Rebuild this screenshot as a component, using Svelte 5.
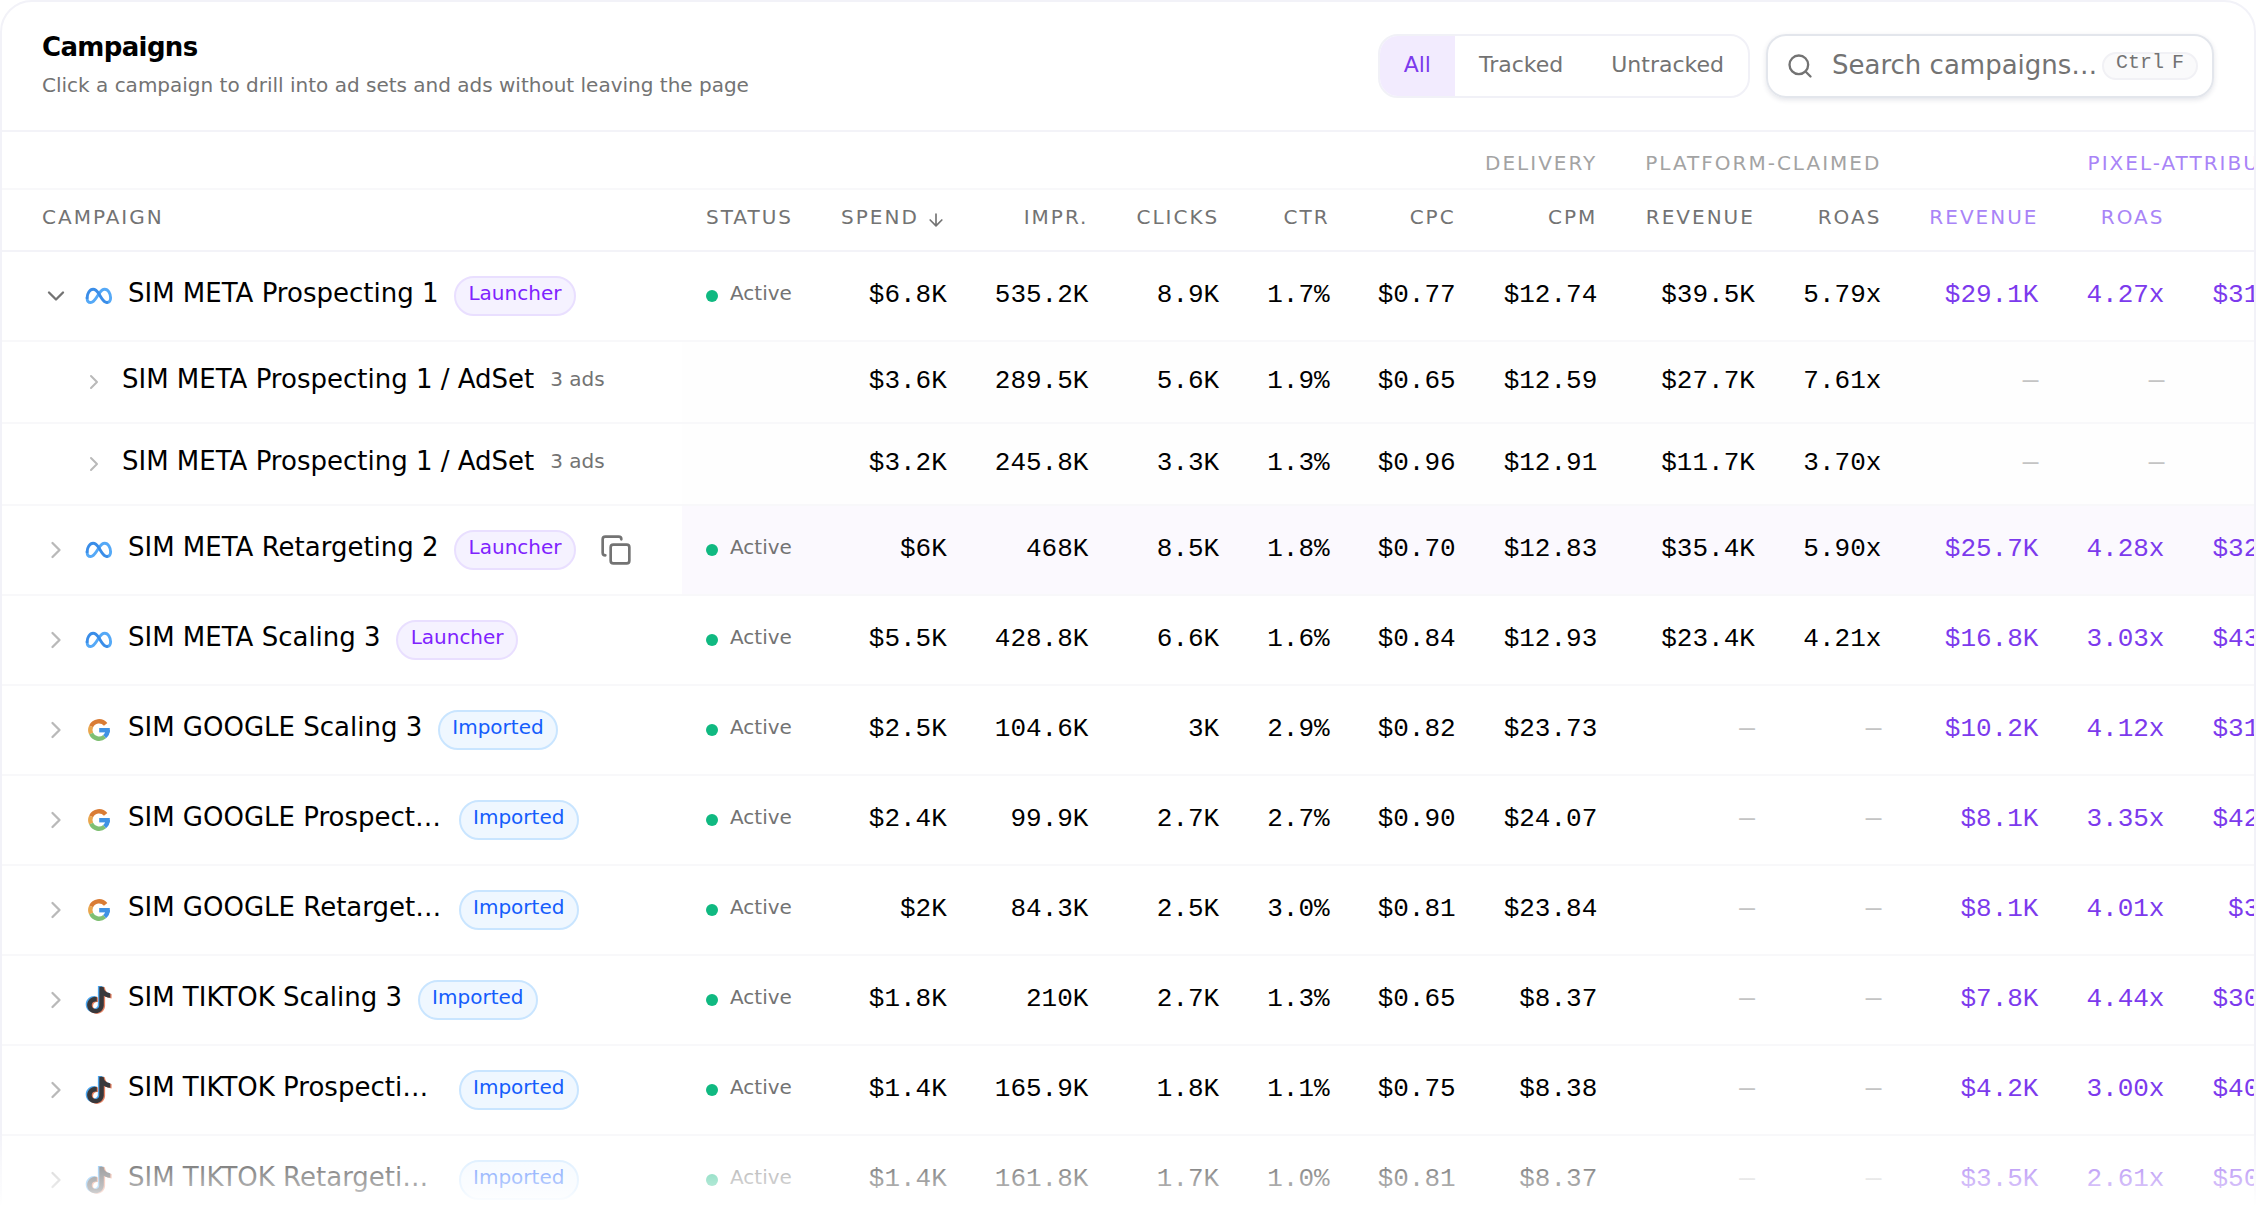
<script lang="ts">
	type Network = 'meta' | 'google' | 'tiktok';

	interface Row {
		name: string;
		network?: Network;
		source?: 'Launcher' | 'Imported';
		ads?: number;
		open?: boolean;
		hovered?: boolean;
		delivery: string[];
		platform: string[];
		pixel: string[];
	}

	const none = '—';

	const rows: Row[] = [
		{ name: 'SIM META Prospecting 1', network: 'meta', source: 'Launcher', open: true, delivery: ['$6.8K', '535.2K', '8.9K', '1.7%', '$0.77', '$12.74'], platform: ['$39.5K', '5.79x'], pixel: ['$29.1K', '4.27x', '$31.08'] },
		{ name: 'SIM META Prospecting 1 / AdSet', ads: 3, delivery: ['$3.6K', '289.5K', '5.6K', '1.9%', '$0.65', '$12.59'], platform: ['$27.7K', '7.61x'], pixel: [none, none, none] },
		{ name: 'SIM META Prospecting 1 / AdSet', ads: 3, delivery: ['$3.2K', '245.8K', '3.3K', '1.3%', '$0.96', '$12.91'], platform: ['$11.7K', '3.70x'], pixel: [none, none, none] },
		{ name: 'SIM META Retargeting 2', network: 'meta', source: 'Launcher', hovered: true, delivery: ['$6K', '468K', '8.5K', '1.8%', '$0.70', '$12.83'], platform: ['$35.4K', '5.90x'], pixel: ['$25.7K', '4.28x', '$32.14'] },
		{ name: 'SIM META Scaling 3', network: 'meta', source: 'Launcher', delivery: ['$5.5K', '428.8K', '6.6K', '1.6%', '$0.84', '$12.93'], platform: ['$23.4K', '4.21x'], pixel: ['$16.8K', '3.03x', '$43.32'] },
		{ name: 'SIM GOOGLE Scaling 3', network: 'google', source: 'Imported', delivery: ['$2.5K', '104.6K', '3K', '2.9%', '$0.82', '$23.73'], platform: [none, none], pixel: ['$10.2K', '4.12x', '$31.41'] },
		{ name: 'SIM GOOGLE Prospecting 1', network: 'google', source: 'Imported', delivery: ['$2.4K', '99.9K', '2.7K', '2.7%', '$0.90', '$24.07'], platform: [none, none], pixel: ['$8.1K', '3.35x', '$42.19'] },
		{ name: 'SIM GOOGLE Retargeting 2', network: 'google', source: 'Imported', delivery: ['$2K', '84.3K', '2.5K', '3.0%', '$0.81', '$23.84'], platform: [none, none], pixel: ['$8.1K', '4.01x', '$33.5'] },
		{ name: 'SIM TIKTOK Scaling 3', network: 'tiktok', source: 'Imported', delivery: ['$1.8K', '210K', '2.7K', '1.3%', '$0.65', '$8.37'], platform: [none, none], pixel: ['$7.8K', '4.44x', '$30.29'] },
		{ name: 'SIM TIKTOK Prospecting 1', network: 'tiktok', source: 'Imported', delivery: ['$1.4K', '165.9K', '1.8K', '1.1%', '$0.75', '$8.38'], platform: [none, none], pixel: ['$4.2K', '3.00x', '$40.84'] },
		{ name: 'SIM TIKTOK Retargeting 2', network: 'tiktok', source: 'Imported', delivery: ['$1.4K', '161.8K', '1.7K', '1.0%', '$0.81', '$8.37'], platform: [none, none], pixel: ['$3.5K', '2.61x', '$50.77'] }
	];

	// the note is drawn three times, shifted, to get the coloured edges
	const note =
		'M12.525.02c1.310-.02 2.610-.01 3.910-.02.08 1.530.63 3.090 1.750 4.170 1.120 1.110 2.700 1.620 4.240 1.790v4.030c-1.440-.05-2.890-.35-4.200-.97-.57-.26-1.100-.59-1.620-.93-.01 2.920.01 5.840-.02 8.750-.08 1.400-.54 2.790-1.350 3.940-1.310 1.920-3.580 3.170-5.910 3.210-1.430.08-2.860-.31-4.080-1.030-2.020-1.190-3.440-3.370-3.650-5.710-.02-.5-.03-1-.01-1.490.18-1.900 1.120-3.720 2.580-4.960 1.660-1.440 3.980-2.130 6.150-1.720.02 1.480-.04 2.960-.04 4.440-.99-.32-2.150-.23-3.020.37-.63.41-1.110 1.040-1.360 1.750-.21.51-.15 1.070-.14 1.610.24 1.640 1.820 3.020 3.500 2.870 1.120-.01 2.190-.66 2.770-1.610.19-.33.4-.67.41-1.060.1-1.790.06-3.570.07-5.360.01-4.030-.01-8.050.02-12.070z';

	const filters = ['All', 'Tracked', 'Untracked'];
	let filter = $state('All');
	let query = $state('');
</script>

{#snippet value(text: string)}
	<td class="num" class:none={text === none}><span class="txt">{text}</span></td>
{/snippet}

{#snippet logo(network: Network)}
	{#if network === 'meta'}
		<svg class="logo" viewBox="0 0 28 28" fill="none" stroke-width="2.9" stroke-linecap="round" stroke-linejoin="round">
			<path stroke="#55a9f7" d="M13.900 11.800C16 8.500 17.700 7.300 19.700 7.300c3.500 0 5.900 4.300 5.900 8.500 0 2.900-1.200 4.700-3.600 4.700" />
			<path stroke="#55a9f7" d="M2.100 15.900c0 2.900 1.300 4.600 3.600 4.600 2.400 0 3.800-1.800 6.100-5.500l2.100-3.200" />
			<path stroke="#3a8de8" d="M2.100 15.900C2.100 11.700 4.700 7.300 8.100 7.300c2.100 0 3.700 1.200 5.800 4.500l1.900 3.200c2.400 4.100 3.900 5.500 6.200 5.500" />
		</svg>
	{:else if network === 'google'}
		<svg class="logo" viewBox="0 0 28 28" fill="none" stroke-width="4.4">
			<path stroke="#d97c35" d="M20.660 8.410A8.700 8.700 0 0 0 6.120 10.320" />
			<path stroke="#eaa64e" d="M6.120 10.320a8.700 8.700 0 0 0 0 7.360" />
			<path stroke="#7fbf73" d="M6.120 17.680a8.700 8.700 0 0 0 13.470 2.980" />
			<path stroke="#3f92e4" d="M19.590 20.660A8.700 8.700 0 0 0 22.700 14" />
			<path fill="#3f92e4" d="M14.200 12H24.800v4.400H14.200z" />
		</svg>
	{:else}
		<svg class="logo" viewBox="0 0 28 28">
			<path fill="#4da6ee" transform="translate(-1 0) scale(1.110)" d={note} />
			<path fill="#e58263" transform="translate(1.700 1.300) scale(1.110)" d={note} />
			<path fill="#38383b" transform="translate(.4 .7) scale(1.110)" d={note} />
		</svg>
	{/if}
{/snippet}

<div class="page">
	<section class="card">
		<header class="top">
			<div class="heading">
				<h2>Campaigns</h2>
				<p>Click a campaign to drill into ad sets and ads without leaving the page</p>
			</div>
			<div class="tools">
				<div class="filters">
					{#each filters as item (item)}
						<button class:active={filter === item} onclick={() => (filter = item)}>{item}</button>
					{/each}
				</div>
				<label class="search">
					<svg viewBox="0 0 24 24" fill="none" stroke="currentColor" stroke-width="2" stroke-linecap="round" stroke-linejoin="round">
						<circle cx="11" cy="11" r="8" />
						<path d="m21 21-4.300-4.300" />
					</svg>
					<input type="text" placeholder="Search campaigns…" bind:value={query} />
					<kbd><span>Ctrl</span><span class="key">F</span></kbd>
				</label>
			</div>
		</header>

		<table>
			<thead>
				<tr class="groups">
					<th colspan="2"></th>
					<th colspan="6"><span class="txt">Delivery</span></th>
					<th colspan="2"><span class="txt">Platform-claimed</span></th>
					<th colspan="3" class="violet"><span class="txt">Pixel-attributed</span></th>
				</tr>
				<tr class="columns">
					<th class="campaign"><span class="txt">Campaign</span></th>
					<th class="status"><span class="txt">Status</span></th>
					<th>
						<span class="sorted">
							<span class="txt">Spend</span>
							<svg viewBox="0 0 24 24" fill="none" stroke="currentColor" stroke-width="2" stroke-linecap="round" stroke-linejoin="round">
								<path d="M12 5v14M19 12l-7 7-7-7" />
							</svg>
						</span>
					</th>
					<th><span class="txt">Impr.</span></th>
					<th><span class="txt">Clicks</span></th>
					<th><span class="txt">CTR</span></th>
					<th><span class="txt">CPC</span></th>
					<th><span class="txt">CPM</span></th>
					<th><span class="txt">Revenue</span></th>
					<th><span class="txt">ROAS</span></th>
					<th class="violet"><span class="txt">Revenue</span></th>
					<th class="violet"><span class="txt">ROAS</span></th>
					<th class="violet"><span class="txt">CPA</span></th>
				</tr>
			</thead>
			<tbody>
				{#each rows as row, i (i)}
					<tr class:adset={row.ads} class:hovered={row.hovered}>
						<td class="campaign">
							<div class="name-cell">
								<svg class="chevron" class:open={row.open} viewBox="0 0 24 24" fill="none" stroke="currentColor" stroke-width="2" stroke-linecap="round" stroke-linejoin="round">
									<path d="m9 18 6-6-6-6" />
								</svg>
								{#if row.network}
									{@render logo(row.network)}
								{/if}
								<span class="name">{row.name}</span>
								{#if row.source}
									<span class="badge {row.source.toLowerCase()}">{row.source}</span>
								{/if}
								{#if row.ads}
									<span class="ads">{row.ads} ads</span>
								{/if}
								{#if row.hovered}
									<svg class="copy" viewBox="0 0 24 24" fill="none" stroke="currentColor" stroke-width="2" stroke-linecap="round" stroke-linejoin="round">
										<rect x="8" y="8" width="14" height="14" rx="2" />
										<path d="M4 16c-1.100 0-2-.9-2-2V4c0-1.100.9-2 2-2h10c1.100 0 2 .9 2 2" />
									</svg>
								{/if}
							</div>
						</td>
						<td class="status">
							{#if row.network}
								<span class="state"><i></i><span>Active</span></span>
							{/if}
						</td>
						{#each row.delivery as text}
							{@render value(text)}
						{/each}
						{#each row.platform as text}
							{@render value(text)}
						{/each}
						{#each row.pixel as text}
							<td class="num pixel" class:none={text === none}><span class="txt">{text}</span></td>
						{/each}
					</tr>
				{/each}
			</tbody>
		</table>
	</section>
	<div class="fade"></div>
</div>

<style>
	:global(body) {
		background: #fff;
	}

	.page {
		position: relative;
		height: 1228px;
		overflow: hidden;
		font-family: 'DejaVu Sans', sans-serif;
		color: #000;
	}

	.card {
		box-sizing: border-box;
		height: 1300px;
		border: 2px solid #f2f2f8;
		border-radius: 32px;
		background: #fff;
		overflow: hidden;
	}

	.top {
		box-sizing: border-box;
		display: flex;
		align-items: center;
		justify-content: space-between;
		height: 130px;
		padding: 0 40px;
		border-bottom: 2px solid #f3f3f8;
	}

	h2 {
		margin: 2px 0 0;
		font-size: 26px;
		line-height: 40px;
		letter-spacing: -0.025em;
	}

	.heading p {
		margin: 2px 0 6px;
		font-size: 20px;
		line-height: 32px;
		color: #737373;
	}

	.tools {
		display: flex;
		gap: 16px;
	}

	.filters {
		display: flex;
		box-sizing: border-box;
		height: 64px;
		border: 2px solid #f1f1f7;
		border-radius: 20px;
		overflow: hidden;
	}

	.filters button {
		border: 0;
		padding: 0 24px 4px;
		background: none;
		font: inherit;
		font-size: 22px;
		color: #737373;
	}

	.filters button.active {
		background: #f2ebfe;
		color: #7c3aed;
	}

	.search {
		display: flex;
		align-items: center;
		box-sizing: border-box;
		width: 448px;
		height: 64px;
		padding: 0 14px 0 18px;
		border: 2px solid #e3e6ec;
		border-radius: 20px;
		box-shadow: 0 2px 5px rgb(30 40 80 / 0.12);
		color: #737373;
	}

	.search svg {
		flex: none;
		width: 28px;
		height: 28px;
	}

	.search input {
		flex: 1;
		min-width: 0;
		margin: 0 0 2px 18px;
		padding: 0;
		border: 0;
		outline: 0;
		background: none;
		font: inherit;
		font-size: 26px;
	}

	.search input::placeholder {
		color: #737373;
		opacity: 1;
	}

	kbd {
		display: flex;
		gap: 8px;
		box-sizing: border-box;
		height: 28px;
		padding: 0 12px;
		border: 2px solid #f1f1f5;
		border-radius: 14px;
		background: #fafafb;
		font-family: 'Liberation Mono', monospace;
		font-size: 20px;
		line-height: 18px;
	}

	table {
		border-collapse: separate;
		border-spacing: 0;
		white-space: nowrap;
	}

	th,
	td {
		box-sizing: border-box;
		padding: 0 24px;
		text-align: right;
		border-bottom: 2px solid #f8f8fa;
	}

	th {
		font-size: 20px;
		font-weight: 400;
		letter-spacing: 0.1em;
		text-transform: uppercase;
		color: #737373;
	}

	.groups th {
		height: 58px;
		color: #a3a3a3;
	}

	.columns th {
		height: 62px;
		border-bottom-color: #f3f3f8;
	}

	th.violet,
	.groups th.violet {
		color: #a984f7;
	}

	.txt {
		position: relative;
		top: -3px;
	}

	.groups .txt {
		top: 3px;
	}

	td .txt {
		top: -1px;
	}

	.sorted {
		display: inline-flex;
		align-items: center;
		gap: 7px;
	}

	.sorted svg {
		width: 20px;
		height: 20px;
		margin-right: 1px;
	}

	th.campaign,
	td.campaign {
		width: 680px;
		min-width: 680px;
		max-width: 680px;
		padding: 0 40px;
		text-align: left;
		background: #fff;
	}

	th.status,
	td.status {
		text-align: left;
	}

	td {
		height: 90px;
	}

	.adset td {
		height: 82px;
		background: #fefefe;
	}

	.hovered td {
		background: #fbf9fe;
	}

	.adset td.campaign,
	.hovered td.campaign {
		background: #fff;
	}

	.num {
		font-family: 'Liberation Mono', monospace;
		font-size: 26px;
	}

	.num.pixel {
		color: #7c3aed;
	}

	.num.none {
		color: #c4c4c4;
	}

	.name-cell {
		display: flex;
		align-items: center;
	}

	.chevron {
		flex: none;
		width: 28px;
		height: 28px;
		margin-right: 15px;
		color: #b9b9b9;
	}

	.chevron.open {
		transform: rotate(90deg);
		color: #737373;
	}

	.logo {
		flex: none;
		width: 28px;
		height: 28px;
		margin-right: 15px;
		overflow: visible;
	}

	.name {
		max-width: 315px;
		overflow: hidden;
		text-overflow: ellipsis;
		font-size: 26px;
		line-height: 40px;
		margin-bottom: 6px;
	}

	.adset .name {
		max-width: none;
	}

	.adset .name-cell {
		padding-left: 40px;
	}

	.adset .chevron {
		width: 24px;
		height: 24px;
		margin-right: 16px;
	}

	.badge {
		box-sizing: border-box;
		height: 40px;
		margin-left: 15.5px;
		padding: 0 12.5px;
		border: 2px solid;
		border-radius: 20px;
		font-size: 20px;
		line-height: 31px;
	}

	.launcher {
		border-color: #e9dfff;
		background: #f5f2ff;
		color: #7f22fe;
	}

	.imported {
		border-color: #c9e5ff;
		background: #eff7ff;
		color: #155dfc;
	}

	.ads {
		margin: 0 0 6px 16px;
		font-size: 20px;
		color: #737373;
	}

	.copy {
		flex: none;
		width: 32px;
		height: 32px;
		margin-left: 23.5px;
		color: #737373;
	}

	.state {
		display: flex;
		align-items: center;
		gap: 12px;
		font-size: 20px;
		color: #737373;
	}

	.state i {
		width: 12px;
		height: 12px;
		border-radius: 50%;
		background: #10b981;
	}

	.state span {
		margin-bottom: 6px;
	}

	/* last rows dissolve into the page */
	.fade {
		position: absolute;
		inset: auto 0 0;
		height: 96px;
		background: linear-gradient(
			to bottom,
			rgb(255 255 255 / 0),
			rgb(255 255 255 / 0.52) 36%,
			rgb(255 255 255 / 0.7) 60%,
			rgb(255 255 255 / 0.92) 72%,
			#fff 78%
		);
	}
</style>
